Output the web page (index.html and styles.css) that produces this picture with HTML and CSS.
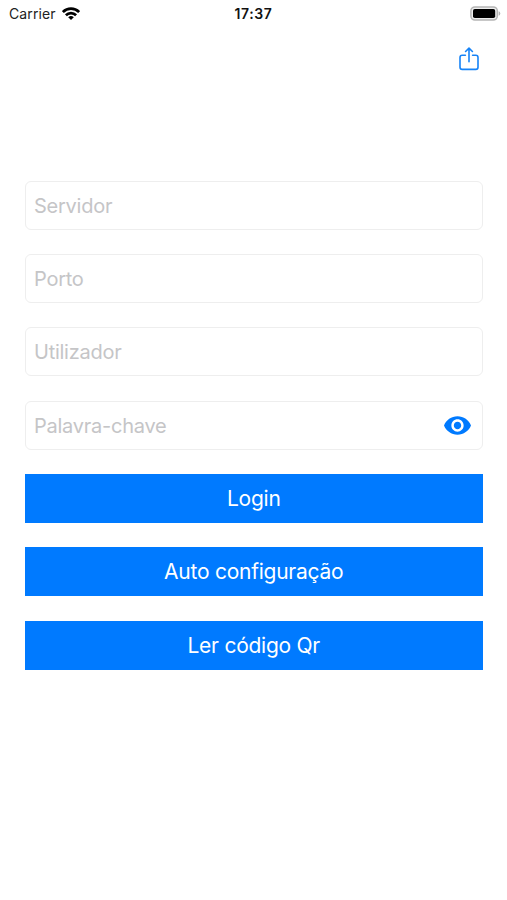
FILE: index.html
```html
<!DOCTYPE html>
<html lang="pt">
<head>
  <meta charset="UTF-8">
  <meta name="viewport" content="width=device-width, initial-scale=1.0">
  <title>Login</title>
  <link rel="stylesheet" href="styles.css">
</head>
<body>
  <div class="status-bar">
    <div class="carrier">
      <span>Carrier</span>
      <svg class="wifi" viewBox="0 0 18 13" width="18" height="13">
        <g fill="none" stroke="#000" stroke-width="2.7">
          <path d="M0.9 5.1a11.4 11.4 0 0 1 16.2 0"/>
          <path d="M3.9 8.3a7.2 7.2 0 0 1 10.2 0"/>
        </g>
        <path d="M9 13l-2.8-2.7a4 4 0 0 1 5.6 0z"/>
      </svg>
    </div>
    <span class="time">17:37</span>
    <div class="battery">
      <svg viewBox="0 0 31 15" width="31" height="15">
        <rect x="0.9" y="0.9" width="26.4" height="13.2" rx="4" fill="#eee" stroke="#b5b5b5" stroke-width="1.5"/>
        <rect x="3" y="3" width="22.2" height="9" rx="1.8"/>
        <path d="M28.6 5.2v4.6q1.7-.6 1.7-2.3t-1.7-2.3z" fill="#b5b5b5"/>
      </svg>
    </div>
  </div>

  <div class="nav-bar">
    <button class="icon-btn" aria-label="Partilhar">
      <svg viewBox="0 0 20 24" width="20" height="24" fill="none" stroke="#1683f7" stroke-width="1.6" stroke-linecap="round" stroke-linejoin="round">
        <path d="M6.4 8.2H3.2Q1 8.2 1 10.4v9.8q0 2.2 2.2 2.2h13.6q2.2 0 2.2-2.2v-9.8q0-2.2-2.2-2.2h-3.2"/>
        <path d="M10 14.8V1.2M6.6 4.5L10 1.1l3.4 3.4"/>
      </svg>
    </button>
  </div>

  <form class="login-form">
    <input class="field" type="text" placeholder="Servidor">
    <input class="field" type="text" placeholder="Porto">
    <input class="field" type="text" placeholder="Utilizador">
    <div class="field password">
      <input type="password" placeholder="Palavra-chave">
      <button type="button" class="icon-btn" aria-label="Mostrar">
        <svg viewBox="1 4.5 22 15" width="27" height="19" fill="#007aff">
          <path d="M12 4.5C7 4.5 2.73 7.61 1 12c1.73 4.39 6 7.5 11 7.5s9.27-3.11 11-7.5c-1.73-4.39-6-7.5-11-7.5zM12 17c-2.76 0-5-2.24-5-5s2.24-5 5-5 5 2.24 5 5-2.24 5-5 5zm0-8c-1.66 0-3 1.34-3 3s1.34 3 3 3 3-1.34 3-3-1.34-3-3-3z"/>
        </svg>
      </button>
    </div>
    <button type="button" class="btn">Login</button>
    <button type="button" class="btn">Auto configuração</button>
    <button type="button" class="btn">Ler código Qr</button>
  </form>
</body>
</html>
```
FILE: styles.css
```css
* {
  box-sizing: border-box;
}
body {
  margin: 0;
  background: #fff;
  font-family: Inter, "Liberation Sans", sans-serif;
}
svg {
  display: block;
}
.status-bar {
  display: grid;
  grid-template-columns: 1fr auto 1fr;
  align-items: center;
  height: 27px;
  padding: 0 6px 0 9px;
  font-size: 14px;
  color: #222;
}
.carrier {
  display: flex;
  align-items: center;
  gap: 6px;
  letter-spacing: 0.1px;
}
.time {
  margin-right: 3px;
  font-weight: 600;
  letter-spacing: 0.6px;
  color: #111;
}
.battery {
  display: flex;
  justify-content: flex-end;
}
.nav-bar {
  display: flex;
  justify-content: flex-end;
  padding: 20px 28.5px 0 0;
}
.icon-btn {
  padding: 0;
  border: none;
  background: none;
}
.login-form {
  display: flex;
  flex-direction: column;
  gap: 24.35px;
  padding: 109.7px 24.5px 0 25px;
}
.field {
  width: 100%;
  height: 49px;
  padding: 1px 8px 0;
  border: 1px solid #eee;
  border-radius: 6px;
  background: #fff;
  font-family: inherit;
  font-size: 20px;
  letter-spacing: -0.25px;
}
.field::placeholder,
.password input::placeholder {
  color: #c5c5c7;
}
.password {
  display: flex;
  align-items: center;
  padding: 0 10.5px 0 8px;
}
.password input {
  flex: 1;
  min-width: 0;
  padding: 1px 0 0;
  border: none;
  font: inherit;
  letter-spacing: inherit;
}
.btn {
  height: 49px;
  padding: 0;
  border: none;
  background: #007aff;
  color: #fff;
  font-family: inherit;
  font-size: 21px;
  letter-spacing: -0.25px;
}
```
